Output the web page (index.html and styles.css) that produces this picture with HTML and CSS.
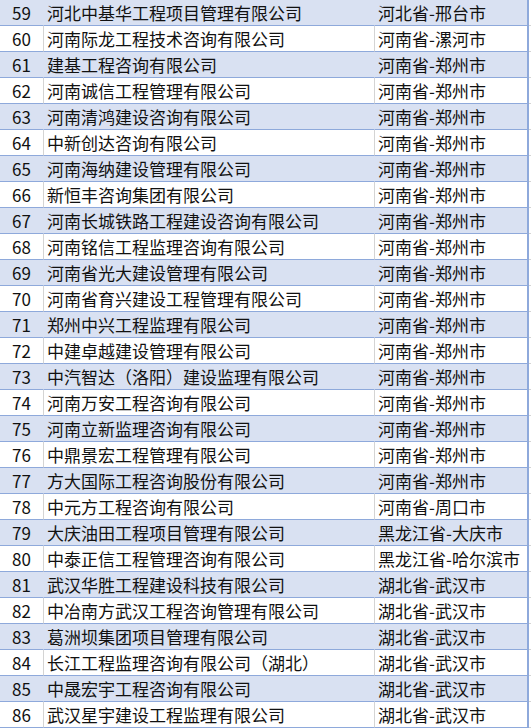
FILE: index.html
```html
<!DOCTYPE html>
<html lang="zh-CN">
<head>
<meta charset="utf-8">
<title>名单</title>
<link rel="stylesheet" href="styles.css">
</head>
<body>
<div class="sheet">
  <div class="row odd"><div class="c num">59</div><div class="c name">河北中基华工程项目管理有限公司</div><div class="c reg">河北省-邢台市</div><div class="c pad"></div></div>
  <div class="row"><div class="c num">60</div><div class="c name">河南际龙工程技术咨询有限公司</div><div class="c reg">河南省-漯河市</div><div class="c pad"></div></div>
  <div class="row odd"><div class="c num">61</div><div class="c name">建基工程咨询有限公司</div><div class="c reg">河南省-郑州市</div><div class="c pad"></div></div>
  <div class="row"><div class="c num">62</div><div class="c name">河南诚信工程管理有限公司</div><div class="c reg">河南省-郑州市</div><div class="c pad"></div></div>
  <div class="row odd"><div class="c num">63</div><div class="c name">河南清鸿建设咨询有限公司</div><div class="c reg">河南省-郑州市</div><div class="c pad"></div></div>
  <div class="row"><div class="c num">64</div><div class="c name">中新创达咨询有限公司</div><div class="c reg">河南省-郑州市</div><div class="c pad"></div></div>
  <div class="row odd"><div class="c num">65</div><div class="c name">河南海纳建设管理有限公司</div><div class="c reg">河南省-郑州市</div><div class="c pad"></div></div>
  <div class="row"><div class="c num">66</div><div class="c name">新恒丰咨询集团有限公司</div><div class="c reg">河南省-郑州市</div><div class="c pad"></div></div>
  <div class="row odd"><div class="c num">67</div><div class="c name">河南长城铁路工程建设咨询有限公司</div><div class="c reg">河南省-郑州市</div><div class="c pad"></div></div>
  <div class="row"><div class="c num">68</div><div class="c name">河南铭信工程监理咨询有限公司</div><div class="c reg">河南省-郑州市</div><div class="c pad"></div></div>
  <div class="row odd"><div class="c num">69</div><div class="c name">河南省光大建设管理有限公司</div><div class="c reg">河南省-郑州市</div><div class="c pad"></div></div>
  <div class="row"><div class="c num">70</div><div class="c name">河南省育兴建设工程管理有限公司</div><div class="c reg">河南省-郑州市</div><div class="c pad"></div></div>
  <div class="row odd"><div class="c num">71</div><div class="c name">郑州中兴工程监理有限公司</div><div class="c reg">河南省-郑州市</div><div class="c pad"></div></div>
  <div class="row"><div class="c num">72</div><div class="c name">中建卓越建设管理有限公司</div><div class="c reg">河南省-郑州市</div><div class="c pad"></div></div>
  <div class="row odd"><div class="c num">73</div><div class="c name">中汽智达（洛阳）建设监理有限公司</div><div class="c reg">河南省-郑州市</div><div class="c pad"></div></div>
  <div class="row"><div class="c num">74</div><div class="c name">河南万安工程咨询有限公司</div><div class="c reg">河南省-郑州市</div><div class="c pad"></div></div>
  <div class="row odd"><div class="c num">75</div><div class="c name">河南立新监理咨询有限公司</div><div class="c reg">河南省-郑州市</div><div class="c pad"></div></div>
  <div class="row"><div class="c num">76</div><div class="c name">中鼎景宏工程管理有限公司</div><div class="c reg">河南省-郑州市</div><div class="c pad"></div></div>
  <div class="row odd"><div class="c num">77</div><div class="c name">方大国际工程咨询股份有限公司</div><div class="c reg">河南省-郑州市</div><div class="c pad"></div></div>
  <div class="row"><div class="c num">78</div><div class="c name">中元方工程咨询有限公司</div><div class="c reg">河南省-周口市</div><div class="c pad"></div></div>
  <div class="row odd"><div class="c num">79</div><div class="c name">大庆油田工程项目管理有限公司</div><div class="c reg">黑龙江省-大庆市</div><div class="c pad"></div></div>
  <div class="row"><div class="c num">80</div><div class="c name">中泰正信工程管理咨询有限公司</div><div class="c reg">黑龙江省-哈尔滨市</div><div class="c pad"></div></div>
  <div class="row odd"><div class="c num">81</div><div class="c name">武汉华胜工程建设科技有限公司</div><div class="c reg">湖北省-武汉市</div><div class="c pad"></div></div>
  <div class="row"><div class="c num">82</div><div class="c name">中冶南方武汉工程咨询管理有限公司</div><div class="c reg">湖北省-武汉市</div><div class="c pad"></div></div>
  <div class="row odd"><div class="c num">83</div><div class="c name">葛洲坝集团项目管理有限公司</div><div class="c reg">湖北省-武汉市</div><div class="c pad"></div></div>
  <div class="row"><div class="c num">84</div><div class="c name">长江工程监理咨询有限公司（湖北）</div><div class="c reg">湖北省-武汉市</div><div class="c pad"></div></div>
  <div class="row odd"><div class="c num">85</div><div class="c name">中晟宏宇工程咨询有限公司</div><div class="c reg">湖北省-武汉市</div><div class="c pad"></div></div>
  <div class="row"><div class="c num">86</div><div class="c name">武汉星宇建设工程监理有限公司</div><div class="c reg">湖北省-武汉市</div><div class="c pad"></div></div>
</div>
</body>
</html>
```

FILE: styles.css
```css
html, body {
  margin: 0;
  padding: 0;
  background: #ffffff;
}

.sheet {
  width: 531px;
  font-family: "Noto Sans CJK SC", "Noto Sans", sans-serif;
  font-size: 17px;
  color: #111111;
}

.row {
  display: grid;
  grid-template-columns: 44px 331px 154px 1fr;
  height: 26px;
}

.c {
  box-sizing: border-box;
  height: 26px;
  line-height: 25px;
  border-bottom: 1px solid #8ea9db;
  white-space: nowrap;
  overflow: hidden;
}

.num {
  text-align: center;
  border-right: 1px solid #d4d4d4;
}

.name {
  padding-left: 3px;
  border-right: 1px solid #d4d4d4;
}

.reg {
  padding-left: 3px;
  border-right: 2px solid #8ea9db;
}

.pad {
  border-bottom-color: #d4d4d4;
}

.odd .num,
.odd .name,
.odd .reg {
  background: #d9e1f2;
}

.odd .num,
.odd .name {
  border-right-color: #d9e1f2;
}
```
